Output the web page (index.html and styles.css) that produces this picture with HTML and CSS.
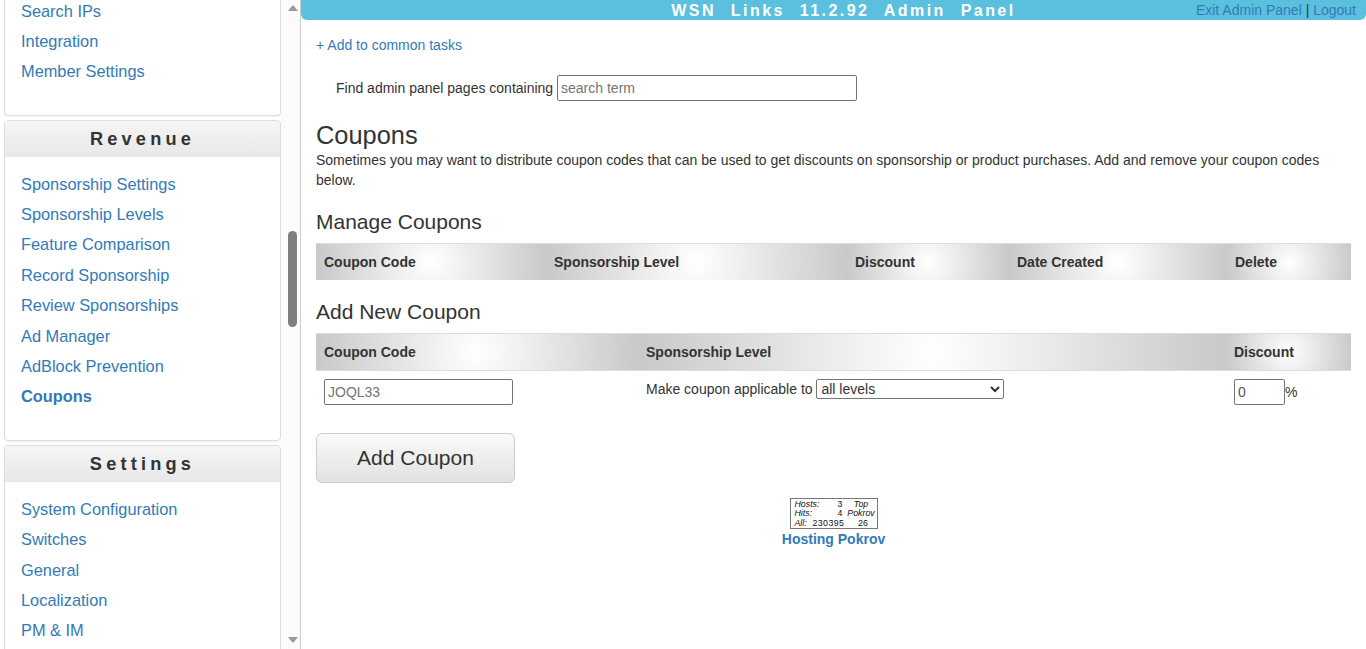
FILE: index.html
```html
<!DOCTYPE html>
<html lang="en">
<head>
<meta charset="utf-8">
<title>Coupons</title>
<link rel="stylesheet" href="styles.css">
</head>
<body>
<aside class="sidebar">
  <nav class="nav">
    <section class="panel panel-first">
      <ul class="links">
        <li><a href="#">Search IPs</a></li>
        <li><a href="#">Integration</a></li>
        <li><a href="#">Member Settings</a></li>
      </ul>
    </section>
    <section class="panel">
      <h3 class="panel-title">Revenue</h3>
      <ul class="links">
        <li><a href="#">Sponsorship Settings</a></li>
        <li><a href="#">Sponsorship Levels</a></li>
        <li><a href="#">Feature Comparison</a></li>
        <li><a href="#">Record Sponsorship</a></li>
        <li><a href="#">Review Sponsorships</a></li>
        <li><a href="#">Ad Manager</a></li>
        <li><a href="#">AdBlock Prevention</a></li>
        <li><a href="#" class="current">Coupons</a></li>
      </ul>
    </section>
    <section class="panel">
      <h3 class="panel-title">Settings</h3>
      <ul class="links">
        <li><a href="#">System Configuration</a></li>
        <li><a href="#">Switches</a></li>
        <li><a href="#">General</a></li>
        <li><a href="#">Localization</a></li>
        <li><a href="#">PM &amp; IM</a></li>
      </ul>
    </section>
  </nav>
  <div class="scrollbar">
    <svg class="arrow" width="10" height="6" viewBox="0 0 10 6"><path d="M5 0L10 6H0Z"/></svg>
    <div class="thumb"></div>
    <svg class="arrow arrow-down" width="10" height="6" viewBox="0 0 10 6"><path d="M0 0H10L5 6Z"/></svg>
  </div>
</aside>
<main class="main">
  <header class="topbar">
    <div class="topbar-title">WSN Links 11.2.92 Admin Panel</div>
    <div class="topbar-links"><a href="#">Exit Admin Panel</a> | <a href="#">Logout</a></div>
  </header>
  <div class="content">
    <p class="common"><a href="#">+ Add to common tasks</a></p>
    <form class="finder">Find admin panel pages containing <input class="field field-search" type="text" placeholder="search term"></form>
    <h1>Coupons</h1>
    <p class="intro">Sometimes you may want to distribute coupon codes that can be used to get discounts on sponsorship or product purchases. Add and remove your coupon codes below.</p>
    <h2>Manage Coupons</h2>
    <table class="grid">
      <colgroup><col class="m1"><col class="m2"><col class="m3"><col class="m4"><col class="m5"></colgroup>
      <thead><tr><th>Coupon Code</th><th>Sponsorship Level</th><th>Discount</th><th>Date Created</th><th>Delete</th></tr></thead>
    </table>
    <h2 class="second">Add New Coupon</h2>
    <table class="grid grid-form">
      <colgroup><col class="a1"><col class="a2"><col class="a3"></colgroup>
      <thead><tr><th>Coupon Code</th><th>Sponsorship Level</th><th>Discount</th></tr></thead>
      <tbody>
        <tr>
          <td><input class="field field-code" type="text" placeholder="JOQL33"></td>
          <td class="applies">Make coupon applicable to <select class="levels"><option>all levels</option></select></td>
          <td><input class="field field-pct" type="text" value="0">%</td>
        </tr>
      </tbody>
    </table>
    <button class="add" type="button">Add Coupon</button>
    <footer class="host">
      <div class="counter">
        <div class="c-row"><i class="c-label">Hosts:</i><span class="c-num">3</span><i class="c-top">Top</i></div>
        <div class="c-row"><i class="c-label">Hits:</i><span class="c-num">4</span><i class="c-top">Pokrov</i></div>
        <div class="c-row"><i class="c-label c-all">All:</i><span class="c-total">230395</span><span class="c-top c-rank">26</span></div>
      </div>
      <a href="#" class="host-link">Hosting Pokrov</a>
    </footer>
  </div>
</main>
</body>
</html>
```
FILE: styles.css
```css
* { box-sizing: border-box; }
html, body { height: 100%; }
body {
  margin: 0;
  display: flex;
  height: 649px;
  overflow: hidden;
  background: #fff;
  color: #333;
  font: 14px/20px "Liberation Sans", Arial, sans-serif;
}
a { color: #337ab7; text-decoration: none; }

.sidebar {
  flex: 0 0 301px;
  display: flex;
  height: 649px;
  border-right: 1px solid #ccc;
  overflow: hidden;
}
.nav {
  flex: 0 0 281px;
  padding-left: 4px;
  overflow: hidden;
}
.panel {
  width: 277px;
  margin-bottom: 4px;
  background: #fff;
  border: 1px solid #ddd;
  border-radius: 4px;
  box-shadow: 0 1px 1px rgba(0,0,0,.05);
}
.panel-first { margin-top: -20px; border-top: 0; }
.panel-title {
  margin: 0;
  height: 36px;
  background: linear-gradient(#f5f5f5, #e8e8e8);
  border-radius: 3px 3px 0 0;
  text-align: center;
  font-size: 18.2px;
  line-height: 36px;
  font-weight: 700;
  letter-spacing: 4.2px;
  color: #333;
}
.links {
  list-style: none;
  margin: 0;
  padding: 11.6px 0 28.4px 16px;
  font-size: 16.38px;
  line-height: 30.4px;
}
.panel-first .links { padding-top: 15.6px; padding-bottom: 28.2px; }
.current { font-weight: 700; }

.scrollbar {
  flex: 0 0 19px;
  display: flex;
  flex-direction: column;
  align-items: center;
  background: #fbfbfb;
  padding-top: 5px;
  padding-bottom: 6px;
}
.arrow { fill: #999; flex: none; margin-left: 4px; }
.arrow-down { margin-top: auto; }
.thumb {
  width: 9px;
  height: 96px;
  margin-top: 220px;
  margin-left: 4px;
  background: #7e7e7e;
  border-radius: 5px;
}

.main { flex: 1; min-width: 0; }
.topbar {
  display: flex;
  height: 20px;
  justify-content: space-between;
  background: #5bc0de;
  border-radius: 0 0 6px 6px;
  padding-right: 10px;
}
.topbar-title {
  flex: 1;
  text-align: center;
  padding-left: 30px;
  color: #fff;
  font-size: 16px;
  line-height: 21px;
  font-weight: 700;
  letter-spacing: 2.45px;
  word-spacing: 8px;
}
.topbar-links { flex: none; line-height: 20px; margin-left: -160px; }

.content { padding: 0 15px; }
.common { margin: 15px 0 0; }
.finder { margin: 20px 0 0 20px; height: 26px; line-height: 26px; }
.field {
  height: 26px;
  padding: 1px 3px;
  border: 1px solid #767676;
  border-radius: 2px;
  font: 14px "Liberation Sans", Arial, sans-serif;
  color: #555;
  background: #fff;
  vertical-align: top;
}
.field::placeholder { color: #757575; opacity: 1; }
.field-search { width: 300px; }
.field-code { width: 189px; }
.field-pct { width: 51px; vertical-align: baseline; }

h1 { margin: 19px 0 0; font-size: 25.4px; line-height: 30px; font-weight: 400; color: #333; }
.intro { margin: 0; }
h2 { margin: 20px 0 10px; font-size: 21px; line-height: 23px; font-weight: 400; color: #333; }
.second { margin-top: 20px; }

.grid { width: 1035px; border-collapse: collapse; table-layout: fixed; }
.grid th {
  height: 36px;
  padding: 7px 8px;
  text-align: left;
  font-weight: 700;
  line-height: 20px;
  vertical-align: middle;
  border-top: 1px solid #ddd;
  background: radial-gradient(circle, #fff 0%, #c8c8c8 100%);
}
.grid-form th { height: 37px; padding-top: 8px; }
.grid tbody td {
  padding: 8px;
  vertical-align: top;
  border-top: 1px solid #ddd;
}
.m1 { width: 230px; } .m2 { width: 301px; } .m3 { width: 162px; } .m4 { width: 218px; } .m5 { width: 124px; }
.a1 { width: 322px; } .a2 { width: 588px; } .a3 { width: 125px; }
.applies { line-height: 20px; }
.levels {
  width: 188px;
  height: 20px;
  font: 14px "Liberation Sans", Arial, sans-serif;
  color: #333;
  background: #fff;
  border: 1px solid #767676;
  border-radius: 2px;
  vertical-align: top;
}

.add {
  display: block;
  width: 199px;
  height: 50px;
  margin-top: 20px;
  font: 21px "Liberation Sans", Arial, sans-serif;
  color: #333;
  background: linear-gradient(#fafafa, #e2e2e2);
  border: 1px solid #ccc;
  border-radius: 6px;
}

.host { display: flex; flex-direction: column; align-items: center; margin-top: 15px; }
.counter {
  width: 88px;
  height: 31px;
  padding: 1px 0 0 4px;
  border: 1px solid #777;
  font: 8.8px/9.5px "Liberation Sans", Arial, sans-serif;
  color: #111;
}
.c-row { display: flex; height: 9.5px; }
.c-label { width: 43px; }
.c-num { width: 5px; text-align: right; }
.c-top { flex: 1; text-align: center; padding-left: 3px; }
.c-all { width: 18px; }
.c-total { width: 32px; letter-spacing: .4px; white-space: nowrap; }
.c-rank { padding-left: 5px; }
.host-link { font-weight: 700; line-height: 20px; margin-top: 0; }
```
